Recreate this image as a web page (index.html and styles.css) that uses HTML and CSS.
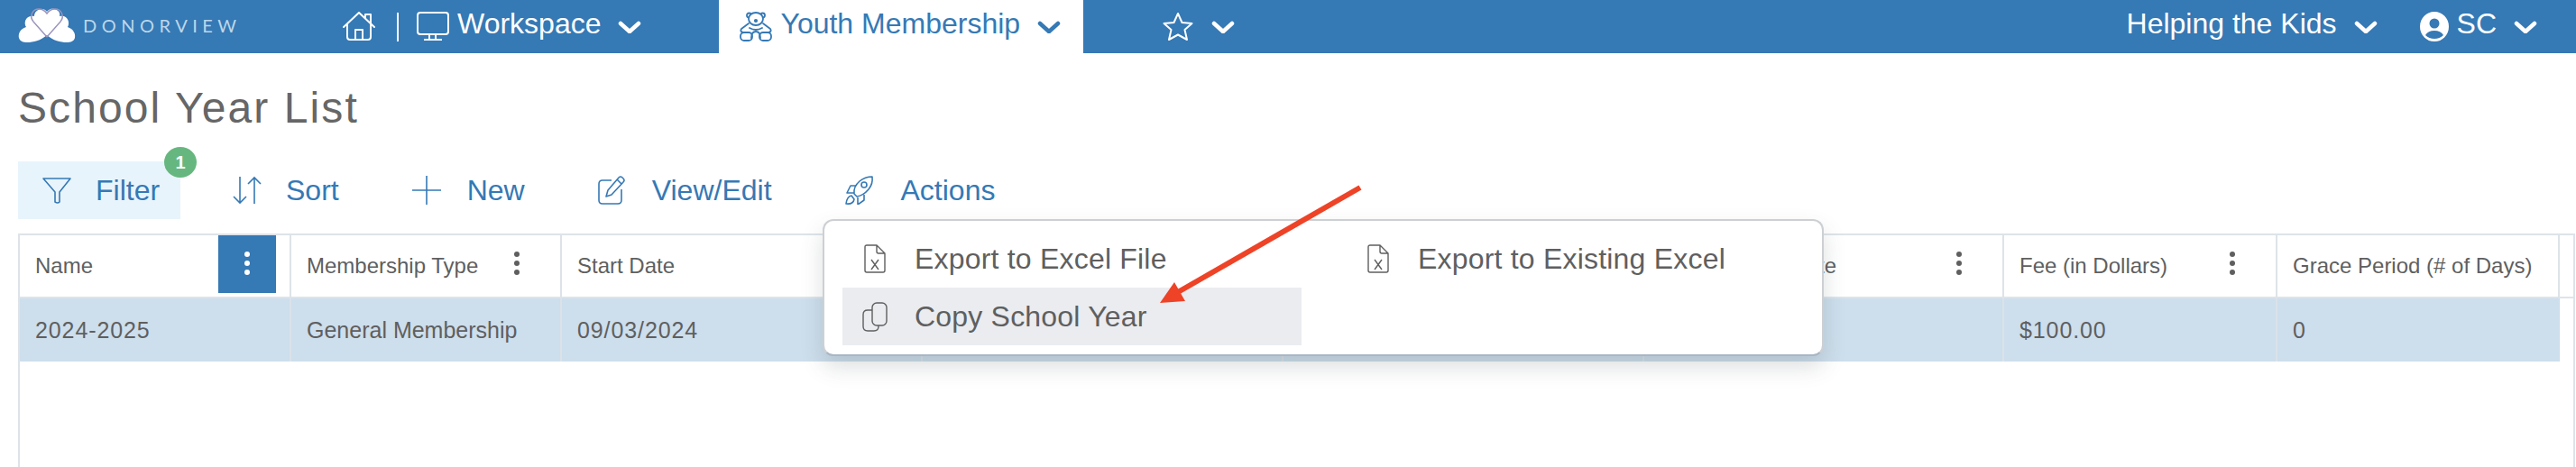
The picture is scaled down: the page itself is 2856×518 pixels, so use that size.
FILE: index.html
```html
<!DOCTYPE html>
<html lang="en">
<head>
<meta charset="utf-8">
<title>School Year List</title>
<link rel="stylesheet" href="styles.css">
</head>
<body>
<div class="page">
  <header class="nav">
    <div class="logo">
      <svg class="logo-mark" width="64" height="40" viewBox="0 0 64 40">
        <path fill="#fff" d="M18 10C8 8 6 18 9 22 2 24 0 30 1 34c1 4 5 5 9 5 7 0 15-2 22-8 7 6 15 8 22 8 4 0 8-1 9-5 1-5-2-10-8-12 3-5 0-14-9-12 2-7-7-9-10-8-3 1-4 3-4 3s-2-3-5-3c-5 0-9 3-9 8z"/>
        <path fill="none" stroke="#9a93bd" stroke-width="1.4" d="M32 33 17 16c-5-6-1-14 6-14 4 0 7 2 9 5 2-3 5-5 9-5 7 0 11 8 6 14L32 33"/>
      </svg>
      <span class="logo-text">DONORVIEW</span>
    </div>
    <svg class="ico home" width="36" height="33" viewBox="0 0 36 33" fill="none" stroke="#fff" stroke-width="2" stroke-linejoin="round" stroke-linecap="round">
      <path d="M1 17 18 1l17 16M25 7V3h6v10M5 14v14q0 3 3 3h20q3 0 3-3V14"/>
      <path d="M14 31V20h8v11"/>
    </svg>
    <span class="sep"></span>
    <svg class="ico mon" width="36" height="33" viewBox="0 0 36 33" fill="none" stroke="#fff" stroke-width="2" stroke-linejoin="round">
      <rect x="1" y="1" width="34" height="24" rx="3"/>
      <path d="M14 25v6M21 25v6M8 31h20"/>
    </svg>
    <span class="nav-label work">Workspace</span>
    <svg class="chev work-chev" width="26" height="14" viewBox="0 0 26 14"><path d="M3 3l10 9 10-9"/></svg>
    <div class="tab">
      <svg class="teddy" width="36" height="33" viewBox="0 0 36 33" fill="none" stroke="#3579b5" stroke-width="1.800" stroke-linejoin="round" stroke-linecap="round">
        <circle cx="10.500" cy="4" r="2.500"/><circle cx="25.500" cy="4" r="2.500"/>
        <ellipse cx="18" cy="8" rx="8" ry="7" fill="#fff"/>
        <circle cx="18" cy="10" r="1.200" fill="#3579b5"/>
        <path d="M10 13 2 19q-2 3 2 4M26 13l8 6q2 3-2 4M11 18q7 4 14 0"/>
        <rect x="1" y="23" width="13" height="9" rx="4"/>
        <rect x="22" y="23" width="13" height="9" rx="4"/>
        <path d="M13 29q0-7 5-7t5 7"/>
      </svg>
      <span class="tab-label">Youth Membership</span>
      <svg class="chev blue" width="26" height="14" viewBox="0 0 26 14"><path d="M3 3l10 9 10-9"/></svg>
    </div>
    <svg class="ico star" width="34" height="33" viewBox="0 0 34 33" fill="none" stroke="#fff" stroke-width="2" stroke-linejoin="round"><path d="M17 2l4.500 10 11 1-8 7 2.500 11L17 25.500 7 31l2.500-11-8-7 11-1z"/></svg>
    <svg class="chev star-chev" width="26" height="14" viewBox="0 0 26 14"><path d="M3 3l10 9 10-9"/></svg>
    <span class="nav-label org">Helping the Kids</span>
    <svg class="chev org-chev" width="26" height="14" viewBox="0 0 26 14"><path d="M3 3l10 9 10-9"/></svg>
    <svg class="user" width="32" height="33" viewBox="0 0 32 33">
      <ellipse cx="16" cy="16.500" rx="16" ry="16.500" fill="#fff"/>
      <circle cx="16" cy="13" r="5.500" fill="#3579b5"/>
      <path fill="#3579b5" d="M6 26q3-5 10-5t10 5q-4 4-10 4T6 26z"/>
    </svg>
    <span class="nav-label sc">SC</span>
    <svg class="chev sc-chev" width="26" height="14" viewBox="0 0 26 14"><path d="M3 3l10 9 10-9"/></svg>
  </header>

  <h1 class="title">School Year List</h1>

  <div class="toolbar">
    <div class="tool filter">
      <svg width="32" height="29" viewBox="0 0 32 29" fill="none" stroke="#3579b5" stroke-width="1.600" stroke-linejoin="round"><path d="M1 1h30L19 16v11q-2 2-5 0V16z"/></svg>
      <span>Filter</span>
      <b class="badge">1</b>
    </div>
    <div class="tool sort">
      <svg width="32" height="32" viewBox="0 0 32 32" fill="none" stroke="#3579b5" stroke-width="1.600"><path d="M8 1v29M1 23l7 7 7-7M24 31V2M17 9l7-7 7 7"/></svg>
      <span>Sort</span>
    </div>
    <div class="tool new">
      <svg width="32" height="32" viewBox="0 0 32 32" fill="none" stroke="#3579b5" stroke-width="1.600"><path d="M16 0v32M0 16h32"/></svg>
      <span>New</span>
    </div>
    <div class="tool edit">
      <svg width="30" height="32" viewBox="0 0 30 32" fill="none" stroke="#3579b5" stroke-width="1.600" stroke-linejoin="round"><path d="M15 5H5q-4 0-4 4v18q0 4 4 4h17q4 0 4-4V15"/><path d="M9 23l2-7L23 2q2-2 4 0l1 1q2 2 0 4L15 21z"/><path d="M21 4l5 5"/></svg>
      <span>View/Edit</span>
    </div>
    <div class="tool actions">
      <svg width="32" height="32" viewBox="0 0 32 32" fill="none" stroke="#3579b5" stroke-width="1.600" stroke-linejoin="round"><path d="M10 20q-1-8 6-14 6-5 14-5 1 8-4 14-6 7-13 8z"/><circle cx="21" cy="10" r="3"/><path d="M12 11H6l-4 8h8M21 21v6l-7 5v-8"/><path d="M7 22q-5 1-6 9 8 1 9-5z"/></svg>
      <span>Actions</span>
    </div>
  </div>

  <section class="table">
    <div class="grid-head">
      <div class="th"><span>Name</span><div class="dots active"><i></i><i></i><i></i></div></div>
      <div class="th"><span>Membership Type</span><div class="dots"><i></i><i></i><i></i></div></div>
      <div class="th"><span>Start Date</span></div>
      <div class="th"></div>
      <div class="th"></div>
      <div class="th th-clip"><span>te</span><div class="dots"><i></i><i></i><i></i></div></div>
      <div class="th"><span>Fee (in Dollars)</span><div class="dots"><i></i><i></i><i></i></div></div>
      <div class="th"><span>Grace Period (# of Days)</span></div>
      <div class="gutter"></div>
    </div>
    <div class="row">
      <div class="td num">2024-2025</div>
      <div class="td">General Membership</div>
      <div class="td num">09/03/2024</div>
      <div class="td"></div>
      <div class="td"></div>
      <div class="td"></div>
      <div class="td num">$100.00</div>
      <div class="td num">0</div>
    </div>
  </section>

  <div class="menu">
    <div class="item">
      <svg width="24" height="32" viewBox="0 0 24 32" fill="none" stroke="#5f5f5f" stroke-width="1.400" stroke-linejoin="round"><path d="M14 1H3Q1 1 1 3v26q0 2 2 2h18q2 0 2-2V10zM14 1v7q0 2 2 2h7"/><path d="M8 17l8 11M16 17L8 28"/></svg>
      <span>Export to Excel File</span>
    </div>
    <div class="item">
      <svg width="24" height="32" viewBox="0 0 24 32" fill="none" stroke="#5f5f5f" stroke-width="1.400" stroke-linejoin="round"><path d="M14 1H3Q1 1 1 3v26q0 2 2 2h18q2 0 2-2V10zM14 1v7q0 2 2 2h7"/><path d="M8 17l8 11M16 17L8 28"/></svg>
      <span>Export to Existing Excel</span>
    </div>
    <div class="item hover">
      <svg width="28" height="33" viewBox="0 0 28 33" fill="none" stroke="#5f5f5f" stroke-width="1.400" stroke-linejoin="round"><rect x="11" y="1" width="16" height="25" rx="5"/><path d="M11 9H6q-5 0-5 5v13q0 5 5 5h7q5 0 5-5v-1"/></svg>
      <span>Copy School Year</span>
    </div>
  </div>

  <svg class="arrow" width="2856" height="518" viewBox="0 0 2856 518">
    <line x1="1508" y1="208" x2="1306" y2="324" class="shaft"/>
    <polygon points="1286,336 1302,313 1314,334" class="tip"/>
  </svg>
</div>
</body>
</html>
```
FILE: styles.css
```css
* { box-sizing: border-box; }
html, body { margin: 0; padding: 0; background: #fff; }
.page {
  position: relative;
  width: 2856px;
  height: 518px;
  overflow: hidden;
  font-family: "Liberation Sans", Arial, sans-serif;
  color: #5f5f5f;
}

/* top bar */
.nav {
  display: flex;
  align-items: center;
  height: 59px;
  background: #3579b5;
  color: #fff;
}
.logo { display: flex; align-items: center; width: 380px; padding: 0 0 4px 20px; }
.logo-text {
  margin-left: 8px;
  font-family: Lato, sans-serif;
  font-size: 20px;
  letter-spacing: 5.500px;
  color: #bcd7ea;
}
.logo-mark { flex: none; }
.ico { flex: none; }
.sep { width: 2px; height: 32px; margin: 0 20px 0 24px; background: #fff; }
.nav-label { font-size: 32px; line-height: 59px; padding-bottom: 7px; }
.work { margin-left: 9px; }
.chev { flex: none; fill: none; stroke: #fff; stroke-width: 4.500; stroke-linecap: round; stroke-linejoin: round; }
.chev.blue { stroke: #3579b5; margin-left: 19px; }
.work-chev { margin-left: 19px; }
.tab {
  display: flex;
  align-items: center;
  width: 404px;
  height: 59px;
  margin-left: 86px;
  padding-left: 23px;
  background: #fff;
}
.tab-label { margin-left: 9px; font-size: 32px; padding-bottom: 7px; color: #3579b5; }
.star { margin-left: 88px; }
.star-chev { margin-left: 20px; }
.org { margin-left: auto; }
.org-chev { margin-left: 19px; }
.user { margin-left: 47px; flex: none; }
.sc { margin-left: 9px; }
.sc-chev { margin-left: 19px; margin-right: 43px; }

/* heading */
.title {
  margin: 0;
  padding: 35px 0 0 20px;
  height: 120px;
  font-size: 48px;
  line-height: 52px;
  font-weight: 400;
  letter-spacing: 2.100px;
  color: #666;
}

/* toolbar */
.toolbar { display: flex; align-items: center; height: 64px; padding-left: 20px; }
.tool { position: relative; display: flex; align-items: center; color: #3579b5; font-size: 32px; }
.tool svg { flex: none; }
.tool span { margin-left: 27px; }
.filter { width: 180px; height: 64px; padding-left: 27px; background: #e8f4fb; }
.sort { margin-left: 58px; }
.new { margin-left: 81px; }
.new span { margin-left: 29px; }
.edit { margin-left: 81px; }
.edit span { margin-left: 30px; }
.actions { margin-left: 81px; }
.actions span { margin-left: 30px; }
.badge {
  position: absolute;
  left: 162px;
  top: -16px;
  width: 36px;
  height: 34px;
  border-radius: 50%;
  background: #66b77f;
  color: #fff;
  font-size: 20px;
  line-height: 34px;
  text-align: center;
}

/* table */
.table {
  width: 2835px;
  height: 259px;
  margin: 16px 0 0 20px;
  border: 2px solid #dde3e9;
  border-bottom: 0;
}
.grid-head, .row {
  display: grid;
  grid-template-columns: 301px 300px 400px 400px 400px 399px 303px 313px;
}
.grid-head {
  grid-template-columns: 301px 300px 400px 400px 400px 399px 303px 313px 17px;
  height: 70px;
  border-bottom: 2px solid #dde3e9;
}
.th {
  display: flex;
  align-items: center;
  justify-content: space-between;
  padding-left: 17px;
  border-right: 2px solid #dde3e9;
  font-size: 24px;
  white-space: nowrap;
}
.th-clip { padding-left: 193px; }
.gutter { border: 0; }
.dots {
  display: flex;
  flex-direction: column;
  align-items: center;
  gap: 4px;
  width: 64px;
  height: 64px;
  margin-right: 16px;
  align-self: flex-start;
  padding-top: 18px;
}
.dots i { width: 6px; height: 6px; border-radius: 50%; background: #5f5f5f; }
.dots.active { background: #3579b5; margin-right: 15px; }
.dots.active i { background: #fff; }
.row { height: 70px; background: #cddeec; width: 2816px; }
.td {
  display: flex;
  align-items: center;
  padding-left: 17px;
  border-right: 2px solid #dbe2e8;
  font-size: 25px;
}
.td.num { letter-spacing: 0.900px; }
.td:last-child { border-right: 0; }

/* dropdown */
.menu {
  position: absolute;
  left: 912px;
  top: 243px;
  display: grid;
  grid-template-columns: 509px 509px;
  column-gap: 49px;
  grid-auto-rows: 64px;
  width: 1110px;
  height: 152px;
  padding: 10px 20px;
  background: #fff;
  border: 2px solid #cdd0d3;
  border-bottom-color: #a9b6c3;
  border-radius: 12px;
  box-shadow: 0 12px 24px rgba(60, 70, 80, .18);
}
.item { display: flex; align-items: center; padding-left: 24px; font-size: 32px; letter-spacing: .2px; color: #5f5f5f; }
.item svg { flex: none; }
.item span { margin-left: 32px; }
.item.hover { background: #eaecf0; padding-left: 22px; }
.item.hover span { margin-left: 30px; }

/* annotation */
.arrow { position: absolute; left: 0; top: 0; pointer-events: none; }
.shaft { stroke: #ee4327; stroke-width: 6; }
.tip { fill: #ee4327; }
```
